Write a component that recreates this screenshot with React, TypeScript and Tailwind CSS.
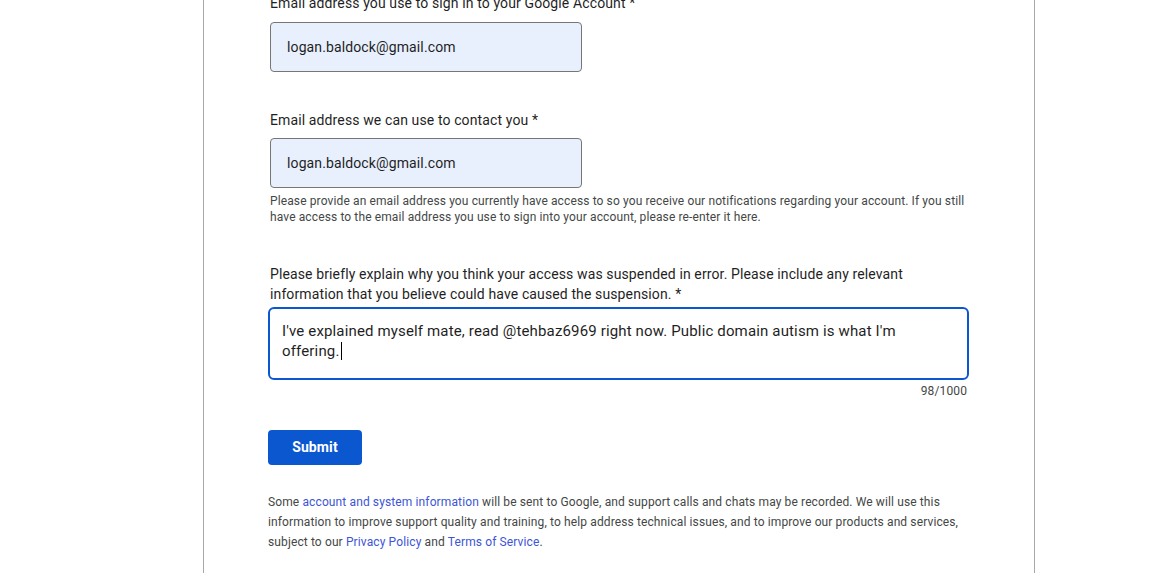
export default function App() {
  const font = { fontFamily: 'Roboto, "Noto Sans", Arial, sans-serif' }

  return (
    <div className="min-h-screen bg-white text-[#1f1f1f] tracking-[0.12px]" style={font}>
      <div className="ml-[203px] flex min-h-[573px] w-[832px] flex-col border-x border-[#a8a8a8] pl-[64px] pr-[66px]">
        <div className="-mt-[7px] flex flex-col">
          <label className="pl-[2px] text-[14px] leading-5">
            Email address you use to sign in to your Google Account *
          </label>
          <div className="mt-[9px] ml-[2px] flex h-[50px] w-[312px] items-center rounded-[4px] border border-[#747775] bg-[#e8f0fe] px-4 text-[14px]">
            logan.baldock@gmail.com
          </div>

          <label className="mt-[38px] pl-[2px] text-[14px] leading-5">
            Email address we can use to contact you *
          </label>
          <div className="mt-2 ml-[2px] flex h-[50px] w-[312px] items-center rounded-[4px] border border-[#747775] bg-[#e8f0fe] px-4 text-[14px]">
            logan.baldock@gmail.com
          </div>
          <p className="mt-[5px] pl-[2px] text-[12px] leading-4 text-[#444746]">
            Please provide an email address you currently have access to so you receive our notifications regarding
            your account. If you still have access to the email address you use to sign into your account, please
            re-enter it here.
          </p>

          <label className="mt-[39px] pl-[2px] text-[14px] leading-5">
            Please briefly explain why you think your access was suspended in error. Please include any relevant
            information that you believe could have caused the suspension. *
          </label>
          <div className="mt-[3px] h-[73px] w-[701px] rounded-[6px] border-2 border-[#0b57d0] pl-3 pr-6 pt-3 text-[15px] leading-5 tracking-[0.15px]">
            I've explained myself mate, read @tehbaz6969 right now. Public domain autism is what I'm offering.
            <span className="ml-px inline-block h-[18px] w-px bg-black align-[-4px]" />
          </div>
          <div className="mt-[3px] w-[699px] text-right text-[12px] leading-4 text-[#444746]">98/1000</div>

          <button className="mt-[31px] h-[35px] w-[94px] rounded-[4px] bg-[#0b57d0] text-[14px] font-bold text-white">
            Submit
          </button>

          <p className="mt-[27px] text-[12px] leading-5 text-[#444746]">
            Some{' '}
            <a href="#" className="text-[#3d55d6]">
              account and system information
            </a>{' '}
            will be sent to Google, and support calls and chats may be recorded. We will use this information to
            improve support quality and training, to help address technical issues, and to improve our products and
            services, subject to our{' '}
            <a href="#" className="text-[#3d55d6]">
              Privacy Policy
            </a>{' '}
            and{' '}
            <a href="#" className="text-[#3d55d6]">
              Terms of Service
            </a>
            .
          </p>
        </div>
      </div>
    </div>
  )
}
